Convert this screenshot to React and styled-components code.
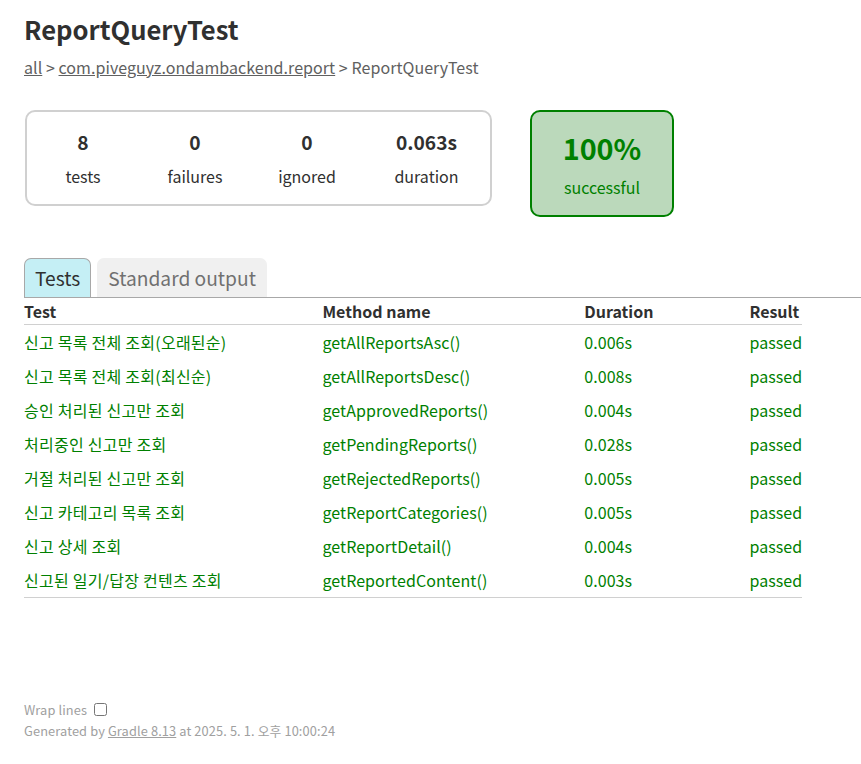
import styled, { createGlobalStyle } from "styled-components";

const GlobalStyle = createGlobalStyle`
  body {
    margin: 0;
    padding: 0;
    font-family: "Noto Sans CJK KR", "Noto Sans", sans-serif;
    font-size: 16px;
    color: #303030;
    background: #fff;
  }
`;

const tests = [
  ["신고 목록 전체 조회(오래된순)", "getAllReportsAsc()", "0.006s"],
  ["신고 목록 전체 조회(최신순)", "getAllReportsDesc()", "0.008s"],
  ["승인 처리된 신고만 조회", "getApprovedReports()", "0.004s"],
  ["처리중인 신고만 조회", "getPendingReports()", "0.028s"],
  ["거절 처리된 신고만 조회", "getRejectedReports()", "0.005s"],
  ["신고 카테고리 목록 조회", "getReportCategories()", "0.005s"],
  ["신고 상세 조회", "getReportDetail()", "0.004s"],
  ["신고된 일기/답장 컨텐츠 조회", "getReportedContent()", "0.003s"],
];

const counters = [
  { value: "8", label: "tests" },
  { value: "0", label: "failures" },
  { value: "0", label: "ignored" },
  { value: "0.063s", label: "duration", wide: true },
];

export default function App() {
  return (
    <>
      <GlobalStyle />
      <Content>
        <Title>ReportQueryTest</Title>
        <Breadcrumbs>
          <a href="#">all</a> &gt; <a href="#">com.piveguyz.ondambackend.report</a> &gt; ReportQueryTest
        </Breadcrumbs>

        <Summary>
          <SummaryGroup>
            {counters.map((c) => (
              <InfoBox key={c.label} $wide={c.wide}>
                <Counter>{c.value}</Counter>
                <InfoLabel>{c.label}</InfoLabel>
              </InfoBox>
            ))}
          </SummaryGroup>
          <SuccessRate>
            <Percent>100%</Percent>
            <InfoLabel>successful</InfoLabel>
          </SuccessRate>
        </Summary>

        <TabLinks>
          <Tab $selected>Tests</Tab>
          <Tab>Standard output</Tab>
        </TabLinks>

        <TestTable>
          <thead>
            <tr>
              <Th>Test</Th>
              <Th>Method name</Th>
              <Th>Duration</Th>
              <Th>Result</Th>
            </tr>
          </thead>
          <tbody>
            {tests.map(([name, method, dur]) => (
              <tr key={method}>
                <Td $korean>{name}</Td>
                <Td>{method}</Td>
                <Td>{dur}</Td>
                <Td>passed</Td>
              </tr>
            ))}
          </tbody>
        </TestTable>

        <Footer>
          <WrapToggle>
            <span>Wrap lines</span>
            <input type="checkbox" />
          </WrapToggle>
          <div>
            Generated by <a href="#">Gradle 8.13</a> at 2025. 5. 1. 오후 10:00:24
          </div>
        </Footer>
      </Content>
    </>
  );
}

const Content = styled.div`
  padding: 10px 0 30px 24px;
`;

const Title = styled.h1`
  font-size: 25.6px;
  font-weight: bold;
  margin: 0 0 10px;
  line-height: 37px;
  white-space: nowrap;
`;

const Breadcrumbs = styled.div`
  color: #606060;
  line-height: 21px;
  letter-spacing: 0.06px;
  a {
    color: #606060;
  }
`;

const Summary = styled.div`
  display: flex;
  align-items: flex-start;
  margin: 32px 0 41px 1px;
`;

const SummaryGroup = styled.div`
  display: flex;
  border: solid 2px #d0d0d0;
  border-radius: 10px;
`;

const InfoBox = styled.div`
  width: ${(p) => (p.$wide ? "127px" : "112px")};
  padding: 16px 0 16px;
  text-align: center;
`;

const Counter = styled.p`
  margin: 0 0 9px;
  font-size: 19.2px;
  font-weight: bold;
  line-height: 28px;
`;

const InfoLabel = styled.p`
  margin: 0;
  line-height: 23px;
`;

const SuccessRate = styled.div`
  width: 140px;
  margin-left: 38px;
  padding: 16px 0 16px;
  text-align: center;
  border: solid 2px #008000;
  border-radius: 10px;
  background-color: #bbd9bb;
  color: #008000;
`;

const Percent = styled.p`
  margin: 0 0 8px;
  font-size: 28.8px;
  font-weight: bold;
  line-height: 40px;
`;

const TabLinks = styled.ul`
  display: flex;
  gap: 6px;
  margin: 0;
  padding: 0;
  list-style: none;
  border-bottom: solid 1px #a8a8a8;
`;

const Tab = styled.li`
  padding: 5px 10px;
  font-size: 19.2px;
  line-height: 28px;
  border: solid 1px ${(p) => (p.$selected ? "#a8a8a8" : "#f0f0f0")};
  border-bottom: none;
  border-radius: 7px 7px 0 0;
  background-color: ${(p) => (p.$selected ? "#c5eff5" : "#f0f0f0")};
  color: ${(p) => (p.$selected ? "#303030" : "#707070")};
`;

const TestTable = styled.table`
  border-collapse: collapse;
  border-bottom: solid #d0d0d0 1px;
`;

const Th = styled.th`
  text-align: left;
  white-space: nowrap;
  padding: 2px 0 1px 96px;
  line-height: 23px;
  border-bottom: solid #d0d0d0 1px;
  &:first-child {
    padding-left: 0;
  }
`;

const Td = styled.td`
  white-space: nowrap;
  padding: 5px 0 5px 96px;
  line-height: 24px;
  color: #008000;
  letter-spacing: ${(p) => (p.$korean ? "0.25px" : "0.06px")};
  &:first-child {
    padding-left: 0;
  }
`;

const Footer = styled.div`
  margin-top: 101px;
  font-size: 12.8px;
  line-height: 21px;
  letter-spacing: 0.12px;
  white-space: nowrap;
  color: #a0a0a0;
  a {
    color: #a0a0a0;
  }
`;

const WrapToggle = styled.label`
  display: flex;
  align-items: center;
  gap: 3px;
  input {
    margin: 2px 4px;
    width: 13px;
    height: 13px;
  }
`;
